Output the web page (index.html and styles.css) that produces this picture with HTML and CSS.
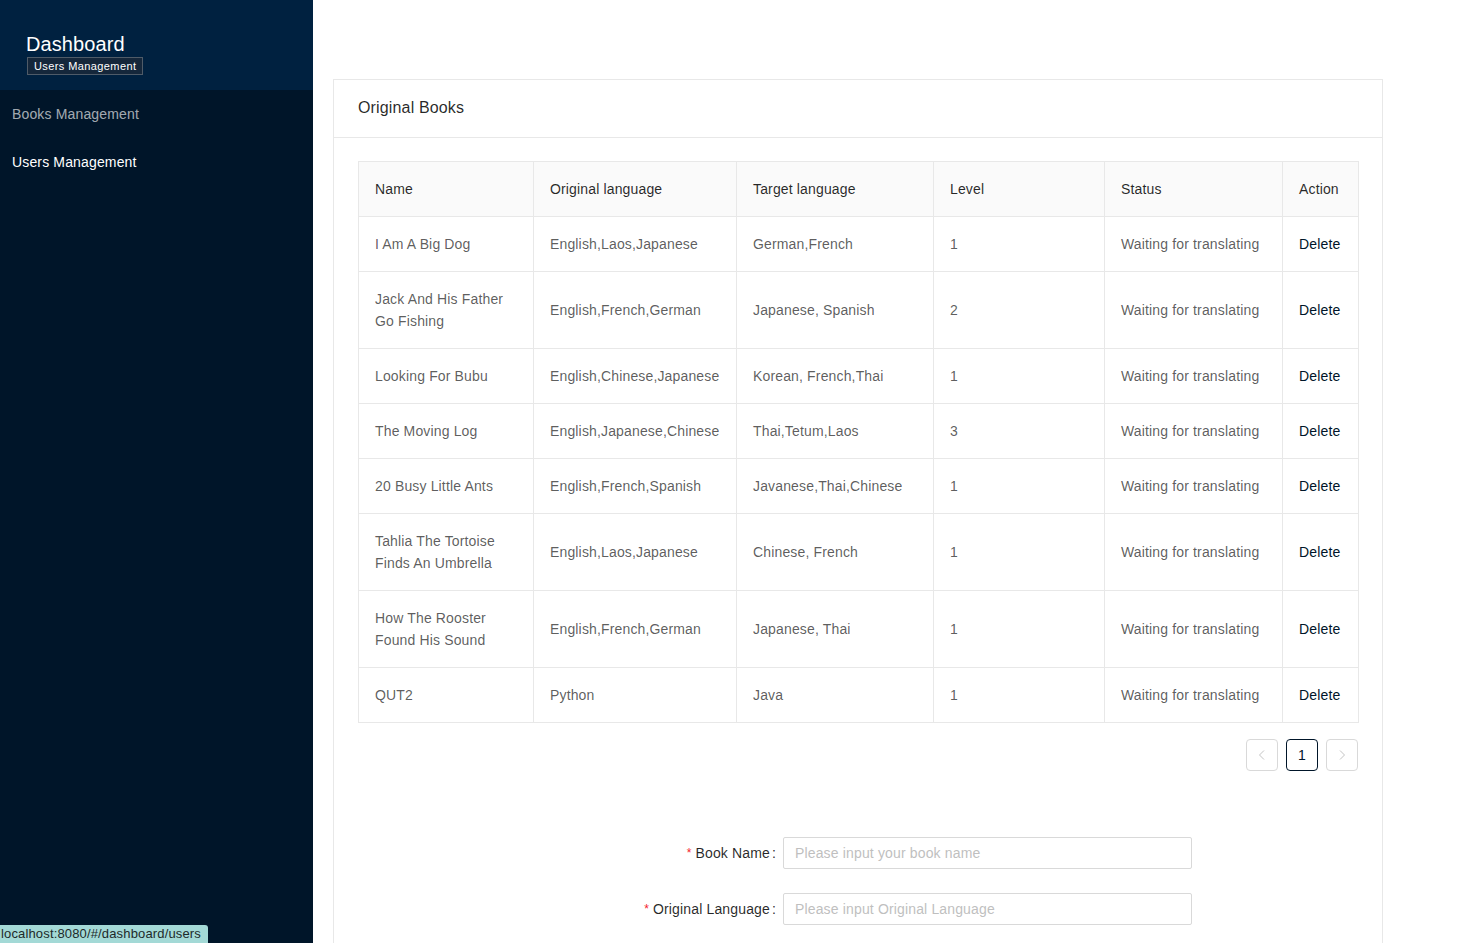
FILE: index.html
```html
<!DOCTYPE html>
<html>
<head>
<meta charset="utf-8">
<link rel="stylesheet" href="styles.css">
</head>
<body>
<div class="layout">
  <aside class="sider">
    <div class="logo">
      <div class="logo-title">Dashboard</div>
      <span class="logo-badge">Users Management</span>
    </div>
    <ul class="menu">
      <li class="menu-item">Books Management</li>
      <li class="menu-item active">Users Management</li>
    </ul>
  </aside>
  <main class="content">
    <section class="card">
      <div class="card-head">Original Books</div>
      <div class="card-body">
        <table class="table">
          <colgroup>
            <col class="c1"><col class="c2"><col class="c3"><col class="c4"><col class="c5"><col class="c6">
          </colgroup>
          <thead>
            <tr><th>Name</th><th>Original language</th><th>Target language</th><th>Level</th><th>Status</th><th>Action</th></tr>
          </thead>
          <tbody>
            <tr><td>I Am A Big Dog</td><td>English,Laos,Japanese</td><td>German,French</td><td>1</td><td>Waiting for translating</td><td><a class="link">Delete</a></td></tr>
            <tr><td>Jack And His Father<br>Go Fishing</td><td>English,French,German</td><td>Japanese, Spanish</td><td>2</td><td>Waiting for translating</td><td><a class="link">Delete</a></td></tr>
            <tr><td>Looking For Bubu</td><td>English,Chinese,Japanese</td><td>Korean, French,Thai</td><td>1</td><td>Waiting for translating</td><td><a class="link">Delete</a></td></tr>
            <tr><td>The Moving Log</td><td>English,Japanese,Chinese</td><td>Thai,Tetum,Laos</td><td>3</td><td>Waiting for translating</td><td><a class="link">Delete</a></td></tr>
            <tr><td>20 Busy Little Ants</td><td>English,French,Spanish</td><td>Javanese,Thai,Chinese</td><td>1</td><td>Waiting for translating</td><td><a class="link">Delete</a></td></tr>
            <tr><td>Tahlia The Tortoise<br>Finds An Umbrella</td><td>English,Laos,Japanese</td><td>Chinese, French</td><td>1</td><td>Waiting for translating</td><td><a class="link">Delete</a></td></tr>
            <tr><td>How The Rooster<br>Found His Sound</td><td>English,French,German</td><td>Japanese, Thai</td><td>1</td><td>Waiting for translating</td><td><a class="link">Delete</a></td></tr>
            <tr><td>QUT2</td><td>Python</td><td>Java</td><td>1</td><td>Waiting for translating</td><td><a class="link">Delete</a></td></tr>
          </tbody>
        </table>
        <div class="pagination">
          <span class="page-btn disabled"><svg width="12" height="12" viewBox="0 0 12 12"><path d="M8 1.5 L3.5 6 L8 10.5" fill="none" stroke="#c4c4c4" stroke-width="1"/></svg></span>
          <span class="page-btn current">1</span>
          <span class="page-btn disabled"><svg width="12" height="12" viewBox="0 0 12 12"><path d="M4 1.5 L8.5 6 L4 10.5" fill="none" stroke="#c4c4c4" stroke-width="1"/></svg></span>
        </div>
        <form class="form">
          <div class="form-row">
            <label class="form-label"><span class="req">*</span>Book Name<span class="colon">:</span></label>
            <input class="input" type="text" placeholder="Please input your book name">
          </div>
          <div class="form-row">
            <label class="form-label"><span class="req">*</span>Original Language<span class="colon">:</span></label>
            <input class="input" type="text" placeholder="Please input Original Language">
          </div>
        </form>
      </div>
    </section>
  </main>
</div>
<div class="status-bubble">localhost:8080/#/dashboard/users</div>
</body>
</html>
```
FILE: styles.css
```css
* { box-sizing: border-box; }
html, body { margin: 0; padding: 0; }
body {
  font-family: "Liberation Sans", Arial, sans-serif;
  font-size: 14px;
  letter-spacing: 0.15px;
  color: rgba(0,0,0,0.65);
  background: #fff;
  height: 943px;
  overflow: hidden;
}
.layout { display: flex; min-height: 943px; }
.sider {
  width: 313px;
  flex: 0 0 313px;
  background: #001529;
  min-height: 943px;
}
.logo {
  height: 90px;
  background: #002140;
  padding: 33px 0 0 26px;
}
.logo-title {
  color: #fff;
  font-size: 20px;
  line-height: 22px;
  letter-spacing: 0.1px;
}
.logo-badge {
  display: inline-block;
  margin-top: 2px;
  margin-left: 1px;
  border: 1px solid #4f5b68;
  background: #15273b;
  color: #fff;
  font-size: 11px;
  letter-spacing: 0.4px;
  line-height: 16px;
  padding: 0 6px;
}
.menu { list-style: none; margin: 0; padding: 4px 0 0; }
.menu-item {
  height: 40px;
  line-height: 40px;
  padding-left: 12px;
  margin-bottom: 8px;
  color: rgba(255,255,255,0.65);
  font-size: 14px;
}
.menu-item.active { color: #fff; }
.content { flex: 1; padding: 79px 0 0 20px; }
.card {
  width: 1050px;
  border: 1px solid #e8e8e8;
  border-bottom: none;
  min-height: 870px;
}
.card-head {
  height: 58px;
  line-height: 56px;
  padding: 0 24px;
  font-size: 16px;
  color: rgba(0,0,0,0.85);
  border-bottom: 1px solid #e8e8e8;
}
.card-body { padding: 23px 24px 0; }
.table {
  width: 1000px;
  border-collapse: collapse;
  table-layout: fixed;
  border: 1px solid #e8e8e8;
}
.c1 { width: 175px; } .c2 { width: 203px; } .c3 { width: 197px; }
.c4 { width: 171px; } .c5 { width: 178px; } .c6 { width: 76px; }
.table th, .table td {
  border: 1px solid #e8e8e8;
  padding: 16px 16px;
  line-height: 22px;
  text-align: left;
  font-weight: normal;
  white-space: nowrap;
}
.table th {
  background: #fafafa;
  color: rgba(0,0,0,0.85);
}
.link { color: #001529; }
.pagination {
  display: flex;
  justify-content: flex-end;
  gap: 8px;
  margin-top: 16px;
}
.page-btn {
  width: 32px;
  height: 32px;
  border: 1px solid #d9d9d9;
  border-radius: 4px;
  display: flex;
  align-items: center;
  justify-content: center;
  color: rgba(0,0,0,0.65);
}
.page-btn.current { border-color: #001529; color: #001529; }
.form { margin-top: 66px; }
.form-row {
  display: flex;
  align-items: center;
  margin-bottom: 24px;
}
.form-label {
  width: 425px;
  text-align: right;
  color: rgba(0,0,0,0.85);
  font-size: 14px;
  line-height: 32px;
}
.req { color: #f5222d; font-size: 12px; margin-right: 4px; vertical-align: 1px; }
.colon { margin: 0 7px 0 2px; }
.input {
  width: 409px;
  height: 32px;
  border: 1px solid #d9d9d9;
  border-radius: 2px;
  padding: 4px 11px;
  font-family: "Liberation Sans", Arial, sans-serif;
  font-size: 14px;
  letter-spacing: 0.15px;
  outline: none;
}
.input::placeholder { color: #bfbfbf; }
.status-bubble {
  position: fixed;
  left: 0;
  bottom: 0;
  height: 18px;
  line-height: 18px;
  padding: 0 7px 0 1px;
  background: #a3d9d6;
  color: #1d2a2a;
  font-size: 13px;
  border-top-right-radius: 3px;
}
```
